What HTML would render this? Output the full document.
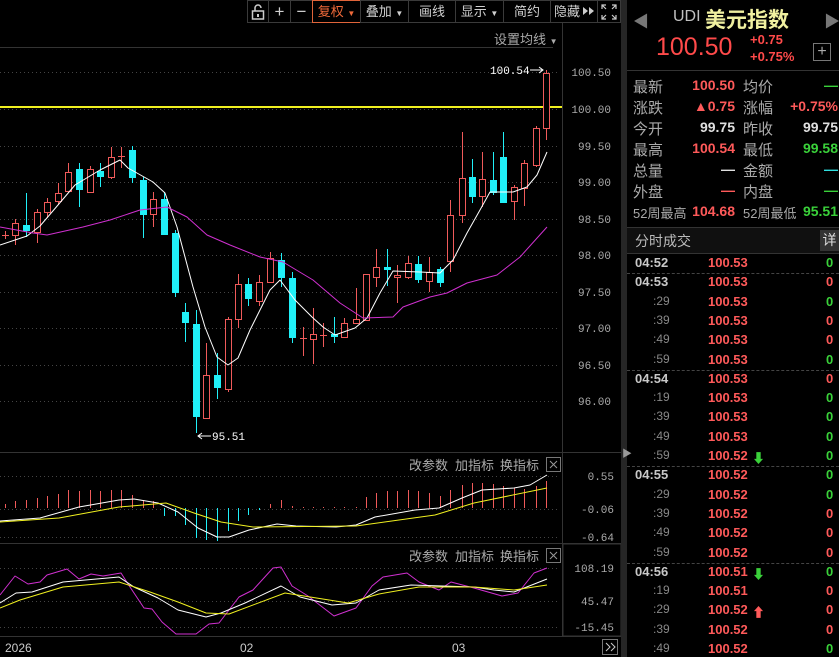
<!DOCTYPE html>
<html><head><meta charset="utf-8">
<style>
*{margin:0;padding:0;box-sizing:border-box}
body{width:839px;height:657px;background:#000;overflow:hidden;position:relative;font-family:"Liberation Sans","Noto Sans CJK SC",sans-serif;color:#c8c8c8}
.tb{position:absolute;top:0;height:23px;border:1px solid #3a3a3a;font-size:13px;line-height:21px;text-align:center;color:#d0d0d0;background:#000;white-space:nowrap;overflow:hidden}
.abs{position:absolute;white-space:nowrap}
.rp div{position:absolute;white-space:nowrap}
</style></head><body>
<svg id="ch" width="622" height="657" style="position:absolute;left:0;top:0" xmlns="http://www.w3.org/2000/svg"></svg>

<div class="tb" style="left:247px;width:22px"><svg width="14" height="16" viewBox="0 0 14 16" style="margin-top:3px"><rect x="1.5" y="7" width="11" height="8" fill="none" stroke="#ccc" stroke-width="1.5"/><path d="M4 7V4a3 3 0 0 1 6 0" fill="none" stroke="#ccc" stroke-width="1.5"/><rect x="6" y="10" width="2" height="3" fill="#ccc"/></svg></div>
<div class="tb" style="left:268px;width:23px;font-size:17px">+</div>
<div class="tb" style="left:290px;width:23px;font-size:17px">−</div>
<div class="tb" style="left:312px;width:49px;border-color:#e0643a;color:#f06a3a">复权 <span style="font-size:8px">▼</span></div>
<div class="tb" style="left:360px;width:49px">叠加 <span style="font-size:8px">▼</span></div>
<div class="tb" style="left:408px;width:48px">画线</div>
<div class="tb" style="left:455px;width:49px">显示 <span style="font-size:8px">▼</span></div>
<div class="tb" style="left:503px;width:48px">简约</div>
<div class="tb" style="left:550px;width:48px;text-align:left;padding-left:3px">隐藏<svg width="14" height="10" viewBox="0 0 14 10" style="margin-left:2px"><path d="M1 1l5 4-5 4zM7 1l5 4-5 4z" fill="#ccc"/></svg></div>
<div class="tb" style="left:597px;width:24px"><svg width="16" height="16" viewBox="0 0 16 16" style="margin-top:3px" fill="none" stroke="#ccc" stroke-width="1.2"><path d="M1 5V1h4M11 1h4v4M15 11v4h-4M5 15H1v-4M1 1l4 4M15 1l-4 4M15 15l-4-4M1 15l4-4"/></svg></div>

<div class="abs" style="left:494px;top:29px;font-size:13px;color:#aaa">设置均线 <span style="font-size:8px">▼</span></div>

<div class="abs" style="left:621px;top:0;width:6px;height:657px;background:#262626"></div>
<div class="abs" style="left:622px;top:445px;font-size:10px;color:#999">▶</div>

<div class="rp">
<div style="left:633px;top:8px;color:#777;font-size:16px">◀</div>
<div style="left:824px;top:8px;color:#777;font-size:16px">▶</div>
<div style="left:673px;top:8px;font-size:16px;color:#c0c0c0">UDI</div>
<div style="left:705px;top:4px;font-size:21px;color:#f0f0a0;font-weight:bold">美元指数</div>
<div style="left:656px;top:33px;font-size:25px;color:#ff4a4a">100.50</div>
<div style="left:750px;top:32px;font-size:13px;color:#ff4a4a;font-weight:bold">+0.75</div>
<div style="left:750px;top:49px;font-size:13px;color:#ff4a4a;font-weight:bold">+0.75%</div>
<div style="left:813px;top:43px;width:18px;height:18px;border:1px solid #777;color:#aaa;font-size:16px;line-height:15px;text-align:center">+</div>
</div>
<div class="abs" style="left:627px;top:70px;width:212px;height:1px;background:#333"></div>
<div class="rp" id="quote" style="font-size:14px"></div>
<div class="abs" style="left:627px;top:227px;width:212px;height:1px;background:#333"></div>
<div class="abs" style="left:627px;top:228px;width:212px;height:25px;background:#101010"></div>
<div class="abs" style="left:635px;top:231px;font-size:14px;color:#bbb">分时成交</div>
<div class="abs" style="left:820px;top:230px;width:19px;height:21px;background:#333;color:#ddd;font-size:14px;line-height:21px;text-align:center">详</div>
<div class="abs" style="left:627px;top:253px;width:212px;height:1px;background:#333"></div>
<div class="rp" id="trades" style="font-size:13px;font-weight:bold"></div>

<script>
const S='http://www.w3.org/2000/svg';const svg=document.getElementById('ch');
function el(t,a,txt){const e=document.createElementNS(S,t);for(const k in a)e.setAttribute(k,a[k]);if(txt!=null)e.textContent=txt;svg.appendChild(e);return e}
el('line',{x1:0,y1:47.5,x2:553,y2:47.5,stroke:'#333'});
el('line',{x1:562.5,y1:23,x2:562.5,y2:637,stroke:'#333'});
[452.5,543.5,636.5].forEach(y=>el('line',{x1:0,y1:y,x2:621,y2:y,stroke:'#333'}));
const pl=[['100.50',72],['100.00',109],['99.50',146],['99.00',182],['98.50',219],['98.00',255],['97.50',292],['97.00',328],['96.50',365],['96.00',401]];
pl.forEach(([t,y])=>{el('line',{x1:0,y1:y+.5,x2:560,y2:y+.5,stroke:'#444','stroke-dasharray':'1,3'});el('text',{x:611,y:y+4,'font-size':11,fill:'#aaa','text-anchor':'end','font-family':'Liberation Mono,monospace'},t)});
[['0.55',476],['-0.06',509],['-0.64',537]].forEach(([t,y])=>{el('line',{x1:0,y1:y+.5,x2:560,y2:y+.5,stroke:'#444','stroke-dasharray':'1,3'});el('text',{x:614,y:y+4,'font-size':11,fill:'#aaa','text-anchor':'end','font-family':'Liberation Mono,monospace'},t)});
[['108.19',568],['45.47',601],['-15.45',627]].forEach(([t,y])=>{el('line',{x1:0,y1:y+.5,x2:560,y2:y+.5,stroke:'#444','stroke-dasharray':'1,3'});el('text',{x:614,y:y+4,'font-size':11,fill:'#aaa','text-anchor':'end','font-family':'Liberation Mono,monospace'},t)});
el('rect',{x:563,y:544,width:58,height:92,fill:'none',stroke:'#333'});
el('line',{x1:0,y1:107,x2:562,y2:107,stroke:'#f0f020','stroke-width':2});
const C=[[5,235,235,231,239,1],[15,223,235,219,245,1],[26,225,231,193,237,0],[37,212,232,209,243,1],[47,202,212,198,218,1],[58,193,201,183,205,1],[68,172,191,163,193,1],[79,169,190,163,207,0],[90,169,192,166,193,1],[100,171,177,163,187,0],[111,157,177,147,179,1],[121,156,156,147,168,1],[132,150,178,146,183,0],[143,180,215,177,238,0],[153,199,214,192,227,1],[164,199,235,192,235,0],[175,233,293,230,297,0],[185,312,323,303,342,0],[196,324,417,310,433,0],[206,375,418,343,419,1],[217,375,388,353,399,0],[228,319,389,317,392,1],[238,284,319,274,328,1],[248,284,299,278,306,0],[259,282,301,275,306,1],[270,258,282,252,283,1],[281,260,278,253,287,0],[292,278,338,272,343,0],[303,338,338,327,356,1],[313,334,339,308,364,1],[323,335,335,323,347,1],[334,334,337,317,343,0],[344,323,337,318,338,1],[356,319,323,288,323,1],[366,274,320,274,321,1],[376,267,277,249,287,1],[387,267,270,249,286,0],[397,275,277,265,303,1],[408,263,277,256,279,1],[418,264,280,256,283,0],[429,272,281,257,292,1],[440,269,283,267,287,0],[450,215,261,200,272,1],[462,178,215,132,223,1],[472,177,197,159,203,0],[482,179,196,152,207,1],[493,180,193,152,195,0],[503,157,203,132,203,0],[514,187,201,185,220,1],[524,163,188,160,206,1],[536,128,165,126,167,1],[546,73,128,70,140,1]];
const RED='#f05a5a',CY='#20f0f8';
C.forEach(([x,bt,bb,wt,wb,u])=>{const c=u?RED:CY;
 el('line',{x1:x+.5,y1:wt,x2:x+.5,y2:wb,stroke:c});
 const h=Math.max(bb-bt,1);
 if(u){ if(h<=1) el('line',{x1:x-3,y1:bt+.5,x2:x+4,y2:bt+.5,stroke:c});
   else el('rect',{x:x-2.5,y:bt+.5,width:6,height:h,fill:'#000',stroke:c});}
 else el('rect',{x:x-3,y:bt,width:7,height:Math.max(h,2),fill:c});
});
function poly(pts,c,w){el('polyline',{points:pts.map(p=>p.join(',')).join(' '),fill:'none',stroke:c,'stroke-width':w||1,'stroke-linejoin':'round'})}
poly([[0,245],[27,236],[40,226],[58,205],[75,185],[100,170],[120,160],[128,168],[153,182],[165,193],[177,227],[193,287],[205,327],[217,357],[228,365],[238,358],[250,330],[270,290],[280,280],[295,300],[312,317],[323,327],[335,335],[355,328],[367,318],[380,293],[393,271],[420,272],[440,273],[453,260],[467,233],[480,210],[490,192],[513,192],[527,187],[537,175],[547,152]],'#fff');
poly([[0,227],[33,233],[47,235],[83,227],[110,220],[140,210],[167,207],[187,217],[207,235],[230,245],[260,257],[283,262],[313,280],[340,303],[363,318],[393,317],[403,307],[430,297],[447,293],[467,283],[497,275],[520,257],[547,227]],'#d030d0');
el('text',{x:490,y:74,'font-size':11,fill:'#fff','font-family':'Liberation Mono,monospace'},'100.54');
el('path',{d:'M530 70h13M539 67l4 3-4 3',stroke:'#fff',fill:'none'});
el('path',{d:'M198 436h13M202 433l-4 3 4 3',stroke:'#fff',fill:'none'});
el('text',{x:212,y:440,'font-size':11,fill:'#fff','font-family':'Liberation Mono,monospace'},'95.51');
[465,556].forEach(y=>{el('text',{x:409,y:y+5,'font-size':13,fill:'#aaa'},'改参数');el('text',{x:455,y:y+5,'font-size':13,fill:'#aaa'},'加指标');el('text',{x:500,y:y+5,'font-size':13,fill:'#aaa'},'换指标');
 el('rect',{x:546.5,y:y-7.5,width:14,height:14,fill:'none',stroke:'#777'});el('path',{d:`M550 ${y-4}l7 7M557 ${y-4}l-7 7`,stroke:'#999'})});
const Z=508;
const mb=[4,7,8,10,12,14,18,17,18,17,18,18,13,8,7,-8,-8,-17,-30,-32,-33,-23,-13,-7,-2,4,8,2,1,1,1,1,1,1,11,15,17,17,18,17,15,12,18,23,25,25,24,22,20,19,22,27];
C.forEach((c,i)=>{const v=mb[i];if(!v)return;const x=c[0]+.5;el('line',{x1:x,y1:Z,x2:x,y2:Z-v,stroke:v>0?RED:CY})});
poly([[0,521],[40,518],[79,507],[119,500],[134,499],[158,503],[178,512],[198,528],[217,537],[229,537],[249,530],[277,524],[296,526],[336,527],[356,525],[375,517],[415,510],[439,508],[462,498],[482,490],[514,488],[530,485],[547,475]],'#fff');
poly([[0,522],[59,518],[119,507],[166,503],[194,513],[221,522],[253,527],[356,526],[435,515],[474,503],[547,488]],'#f0f020');
poly([[0,595],[15,576],[28,584],[40,582],[47,575],[67,569],[79,579],[91,574],[103,576],[121,573],[130,587],[144,608],[152,609],[162,622],[176,634],[196,634],[209,624],[219,623],[229,610],[239,597],[253,590],[273,568],[281,567],[292,586],[308,596],[334,616],[356,608],[372,586],[383,577],[407,573],[419,582],[439,590],[451,582],[474,588],[502,596],[518,593],[534,573],[547,568]],'#d030d0');
poly([[0,603],[16,593],[32,592],[63,582],[119,577],[134,587],[158,598],[178,610],[206,617],[221,613],[245,603],[281,586],[300,597],[332,605],[356,603],[379,590],[411,585],[474,587],[494,590],[514,592],[547,579]],'#fff');
poly([[0,608],[20,600],[63,587],[119,582],[150,592],[178,602],[206,613],[229,614],[285,593],[348,603],[379,594],[419,587],[474,587],[514,590],[547,585]],'#f0f020');
[['2026',5],['02',240],['03',452]].forEach(([t,x])=>el('text',{x:x,y:652,'font-size':12,fill:'#ccc'},t));
el('rect',{x:602.5,y:639.5,width:15,height:15,fill:'none',stroke:'#777'});
el('path',{d:'M606 643l4 4-4 4M611 643l4 4-4 4',stroke:'#ccc',fill:'none'});

const Q=[['最新','100.50','r','均价','—','g'],['涨跌','▲0.75','r','涨幅','+0.75%','r'],['今开','99.75','w','昨收','99.75','w'],['最高','100.54','r','最低','99.58','g'],['总量','—','w','金额','—','cy'],['外盘','—','r','内盘','—','g']];
const col={r:'#ff5a5a',g:'#3ad13a',w:'#e0e0e0',cy:'#30e0e0'};
let h='';Q.forEach((q,i)=>{const y=76+i*21;
h+=`<div style="left:633px;top:${y}px;color:#aaa;font-size:15px">${q[0]}</div><div style="right:104px;top:${y+1}px;color:${col[q[2]]};font-weight:bold">${q[1]}</div><div style="left:743px;top:${y}px;color:#aaa;font-size:15px">${q[3]}</div><div style="right:1px;top:${y+1}px;color:${col[q[5]]};font-weight:bold">${q[4]}</div>`});
h+=`<div style="left:633px;top:203px;color:#aaa;font-size:13px">52周最高</div><div style="right:104px;top:203px;color:#ff5a5a;font-weight:bold">104.68</div><div style="left:743px;top:203px;color:#aaa;font-size:13px">52周最低</div><div style="right:1px;top:203px;color:#3ad13a;font-weight:bold">95.51</div>`;
document.getElementById('quote').innerHTML=h;
const T=[['04:52','100.53','','g',1],['04:53','100.53','','r',1],[':29','100.53','','g'],[':39','100.53','','r'],[':49','100.53','','r'],[':59','100.53','','g'],['04:54','100.53','','r',2],[':19','100.53','','g'],[':39','100.53','','g'],[':49','100.53','','g'],[':59','100.52','d','g'],['04:55','100.52','','g',2],[':29','100.52','','g'],[':39','100.52','','r'],[':49','100.52','','r'],[':59','100.52','','r'],['04:56','100.51','d','g',2],[':19','100.51','','r'],[':29','100.52','u','r'],[':39','100.52','','r'],[':49','100.52','','g']];
let t='';T.forEach((r,i)=>{const y=255+i*19.3;
if(r[4]&&i>0)t+=`<div style="left:627px;top:${y-1}px;width:212px;border-top:1px dashed #444"></div>`;
const big=r[0].length>3;
t+=`<div style="left:${big?635:653}px;top:${y}px;color:${big?'#c8c8c8':'#888'};font-weight:${big?'bold':'normal'};font-size:${big?13:12}px">${r[0]}</div>`;
t+=`<div style="left:708px;top:${y}px;color:#ff5a5a">${r[1]}</div>`;
if(r[2])t+=`<div style="left:752px;top:${y}px;color:${r[2]=='d'?'#3ad13a':'#ff5a5a'}">${r[2]=='d'?'⬇':'⬆'}</div>`;
t+=`<div style="left:826px;top:${y}px;color:${col[r[3]]}">0</div>`});
document.getElementById('trades').innerHTML=t;
</script>
</body></html>
